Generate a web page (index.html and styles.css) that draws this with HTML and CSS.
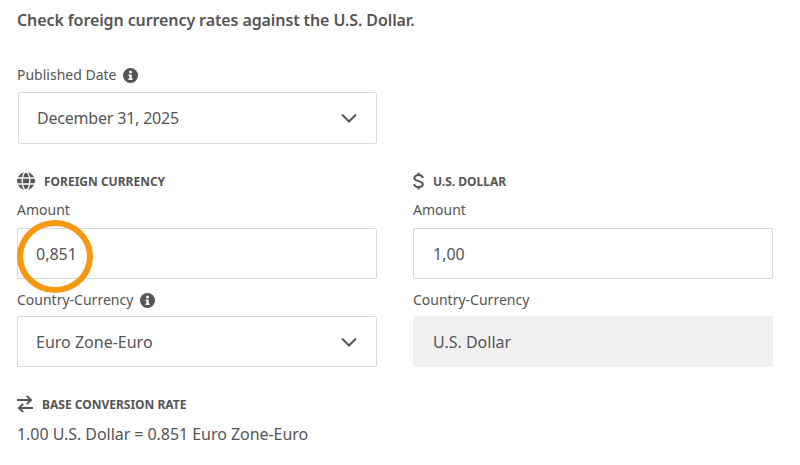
FILE: index.html
```html
<!DOCTYPE html>
<html lang="en">
<head>
  <meta charset="UTF-8">
  <meta name="viewport" content="width=device-width, initial-scale=1.0">
  <title>Currency Converter</title>
  <link rel="stylesheet" href="styles.css">
</head>
<body>
  <div class="shell">
    <p class="intro">Check foreign currency rates against the U.S. Dollar.</p>

    <!-- published date -->
    <div class="date-block">
      <div class="label label-date">Published Date
        <svg class="info" viewBox="0 0 16 16"><circle cx="8" cy="8" r="8" fill="#555"/><rect x="6.6" y="3" width="2.8" height="2.6" fill="#fff"/><path d="M5.9 6.900h3.400v4.400h1v1.500H5.800v-1.500h1v-2.900h-.9z" fill="#fff"/></svg>
      </div>
      <div class="field select field-date">
        <span>December 31, 2025</span>
        <svg class="chevron" viewBox="0 0 16 10"><path d="M1 1.500l7 7 7-7" fill="none" stroke="#555" stroke-width="2"/></svg>
      </div>
    </div>

    <div class="columns">
      <!-- left column -->
      <div class="col">
        <div class="heading">
          <svg class="globe" viewBox="0 0 18 18">
            <circle cx="9" cy="9" r="9" fill="#555"/>
            <path d="M0 6h18M0 12h18" stroke="#fff" stroke-width="1.300"/>
            <ellipse cx="9" cy="9" rx="3.800" ry="9" fill="none" stroke="#fff" stroke-width="1.300"/>
          </svg>
          FOREIGN CURRENCY
        </div>
        <div class="label label-amount">Amount</div>
        <div class="field"><span>0,851</span></div>
        <div class="label label-country">Country-Currency
          <svg class="info" viewBox="0 0 16 16"><circle cx="8" cy="8" r="8" fill="#555"/><rect x="6.6" y="3" width="2.8" height="2.6" fill="#fff"/><path d="M5.9 6.900h3.400v4.400h1v1.500H5.800v-1.500h1v-2.900h-.9z" fill="#fff"/></svg>
        </div>
        <div class="field select">
          <span>Euro Zone-Euro</span>
          <svg class="chevron" viewBox="0 0 16 10"><path d="M1 1.500l7 7 7-7" fill="none" stroke="#555" stroke-width="2"/></svg>
        </div>
      </div>

      <!-- right column -->
      <div class="col">
        <div class="heading heading-usd">
          <svg class="dollar" viewBox="0 0 11 18"><path d="M9.800 6C9.500 4 7.700 3.100 5.500 3.100S1.300 4 1.300 5.900c0 3.900 8.500 2.500 8.500 6.300 0 1.900-2 2.800-4.300 2.800s-4.100-.9-4.400-2.900" fill="none" stroke="#555" stroke-width="2"/><path d="M5.500 .5v3M5.500 14.500v3" stroke="#555" stroke-width="2"/></svg>
          U.S. DOLLAR
        </div>
        <div class="label label-amount">Amount</div>
        <div class="field"><span>1,00</span></div>
        <div class="label label-country">Country-Currency</div>
        <div class="field readonly"><span>U.S. Dollar</span></div>
      </div>
    </div>

    <div class="heading heading-rate">
      <svg class="swap" viewBox="0 0 16 18"><path d="M0 5h14M9.800 .9L14 5l-4.200 4.100M16 13H2M6.200 8.900L2 13l4.200 4.100" fill="none" stroke="#555" stroke-width="2"/></svg>
      BASE CONVERSION RATE
    </div>
    <p class="rate">1.00 U.S. Dollar = 0.851 Euro Zone-Euro</p>

    <!-- highlight ring -->
    <div class="ring"></div>
  </div>
</body>
</html>
```

FILE: styles.css
```css
* {
  margin: 0;
  padding: 0;
  box-sizing: border-box;
}

body {
  background-color: #fff;
  color: #555;
  font-family: "Noto Sans", "Liberation Sans", sans-serif;
  font-size: 15px;
  overflow: hidden;
}

.shell {
  position: relative;
  width: 800px;
  height: 465px;
  padding: 9px 27px 0 17px;
}

.intro {
  font-size: 16px;
  font-weight: 600;
  line-height: 22px;
  letter-spacing: -0.1px;
}

.date-block {
  margin-top: 34px;
  padding-left: 1px;
  width: 360px;
}

.label {
  display: flex;
  align-items: center;
  gap: 7px;
  font-size: 14px;
  line-height: 20px;
}

.label-date {
  margin-left: -1px;
  margin-bottom: 7px;
}

.label-amount {
  margin-bottom: 8px;
}

.label-country {
  margin-top: 11px;
  margin-bottom: 6px;
}

.info {
  width: 15px;
  height: 15px;
}

.field {
  display: flex;
  align-items: center;
  justify-content: space-between;
  height: 51px;
  padding: 0 18px;
  border: 1px solid #d9d9d9;
  border-radius: 2px;
  font-size: 16px;
}

.field-date {
  height: 52px;
  letter-spacing: -0.2px;
}

.select {
  padding-right: 19px;
}

.readonly {
  padding-left: 19px;
  background-color: #f0f0f0;
  border-color: #f0f0f0;
}

.chevron {
  width: 16px;
  height: 10px;
}

.columns {
  display: flex;
  gap: 36px;
  margin-top: 27px;
}

.col {
  width: 360px;
}

.col:last-child .field:not(.readonly) {
  padding-left: 19px;
}

.heading {
  display: flex;
  align-items: center;
  gap: 9px;
  height: 20px;
  margin-bottom: 9px;
  font-size: 12px;
  font-weight: 700;
}

.heading-rate {
  margin-top: 27px;
  margin-bottom: 10px;
}

.globe {
  width: 18px;
  height: 18px;
}

.dollar {
  width: 11px;
  height: 18px;
}

.swap {
  width: 16px;
  height: 18px;
}

.rate {
  font-size: 16px;
  line-height: 20px;
  letter-spacing: -0.05px;
}

.ring {
  position: absolute;
  left: 17px;
  top: 220px;
  width: 76px;
  height: 73px;
  border: 6px solid #f7990f;
  border-radius: 50%;
}
```
